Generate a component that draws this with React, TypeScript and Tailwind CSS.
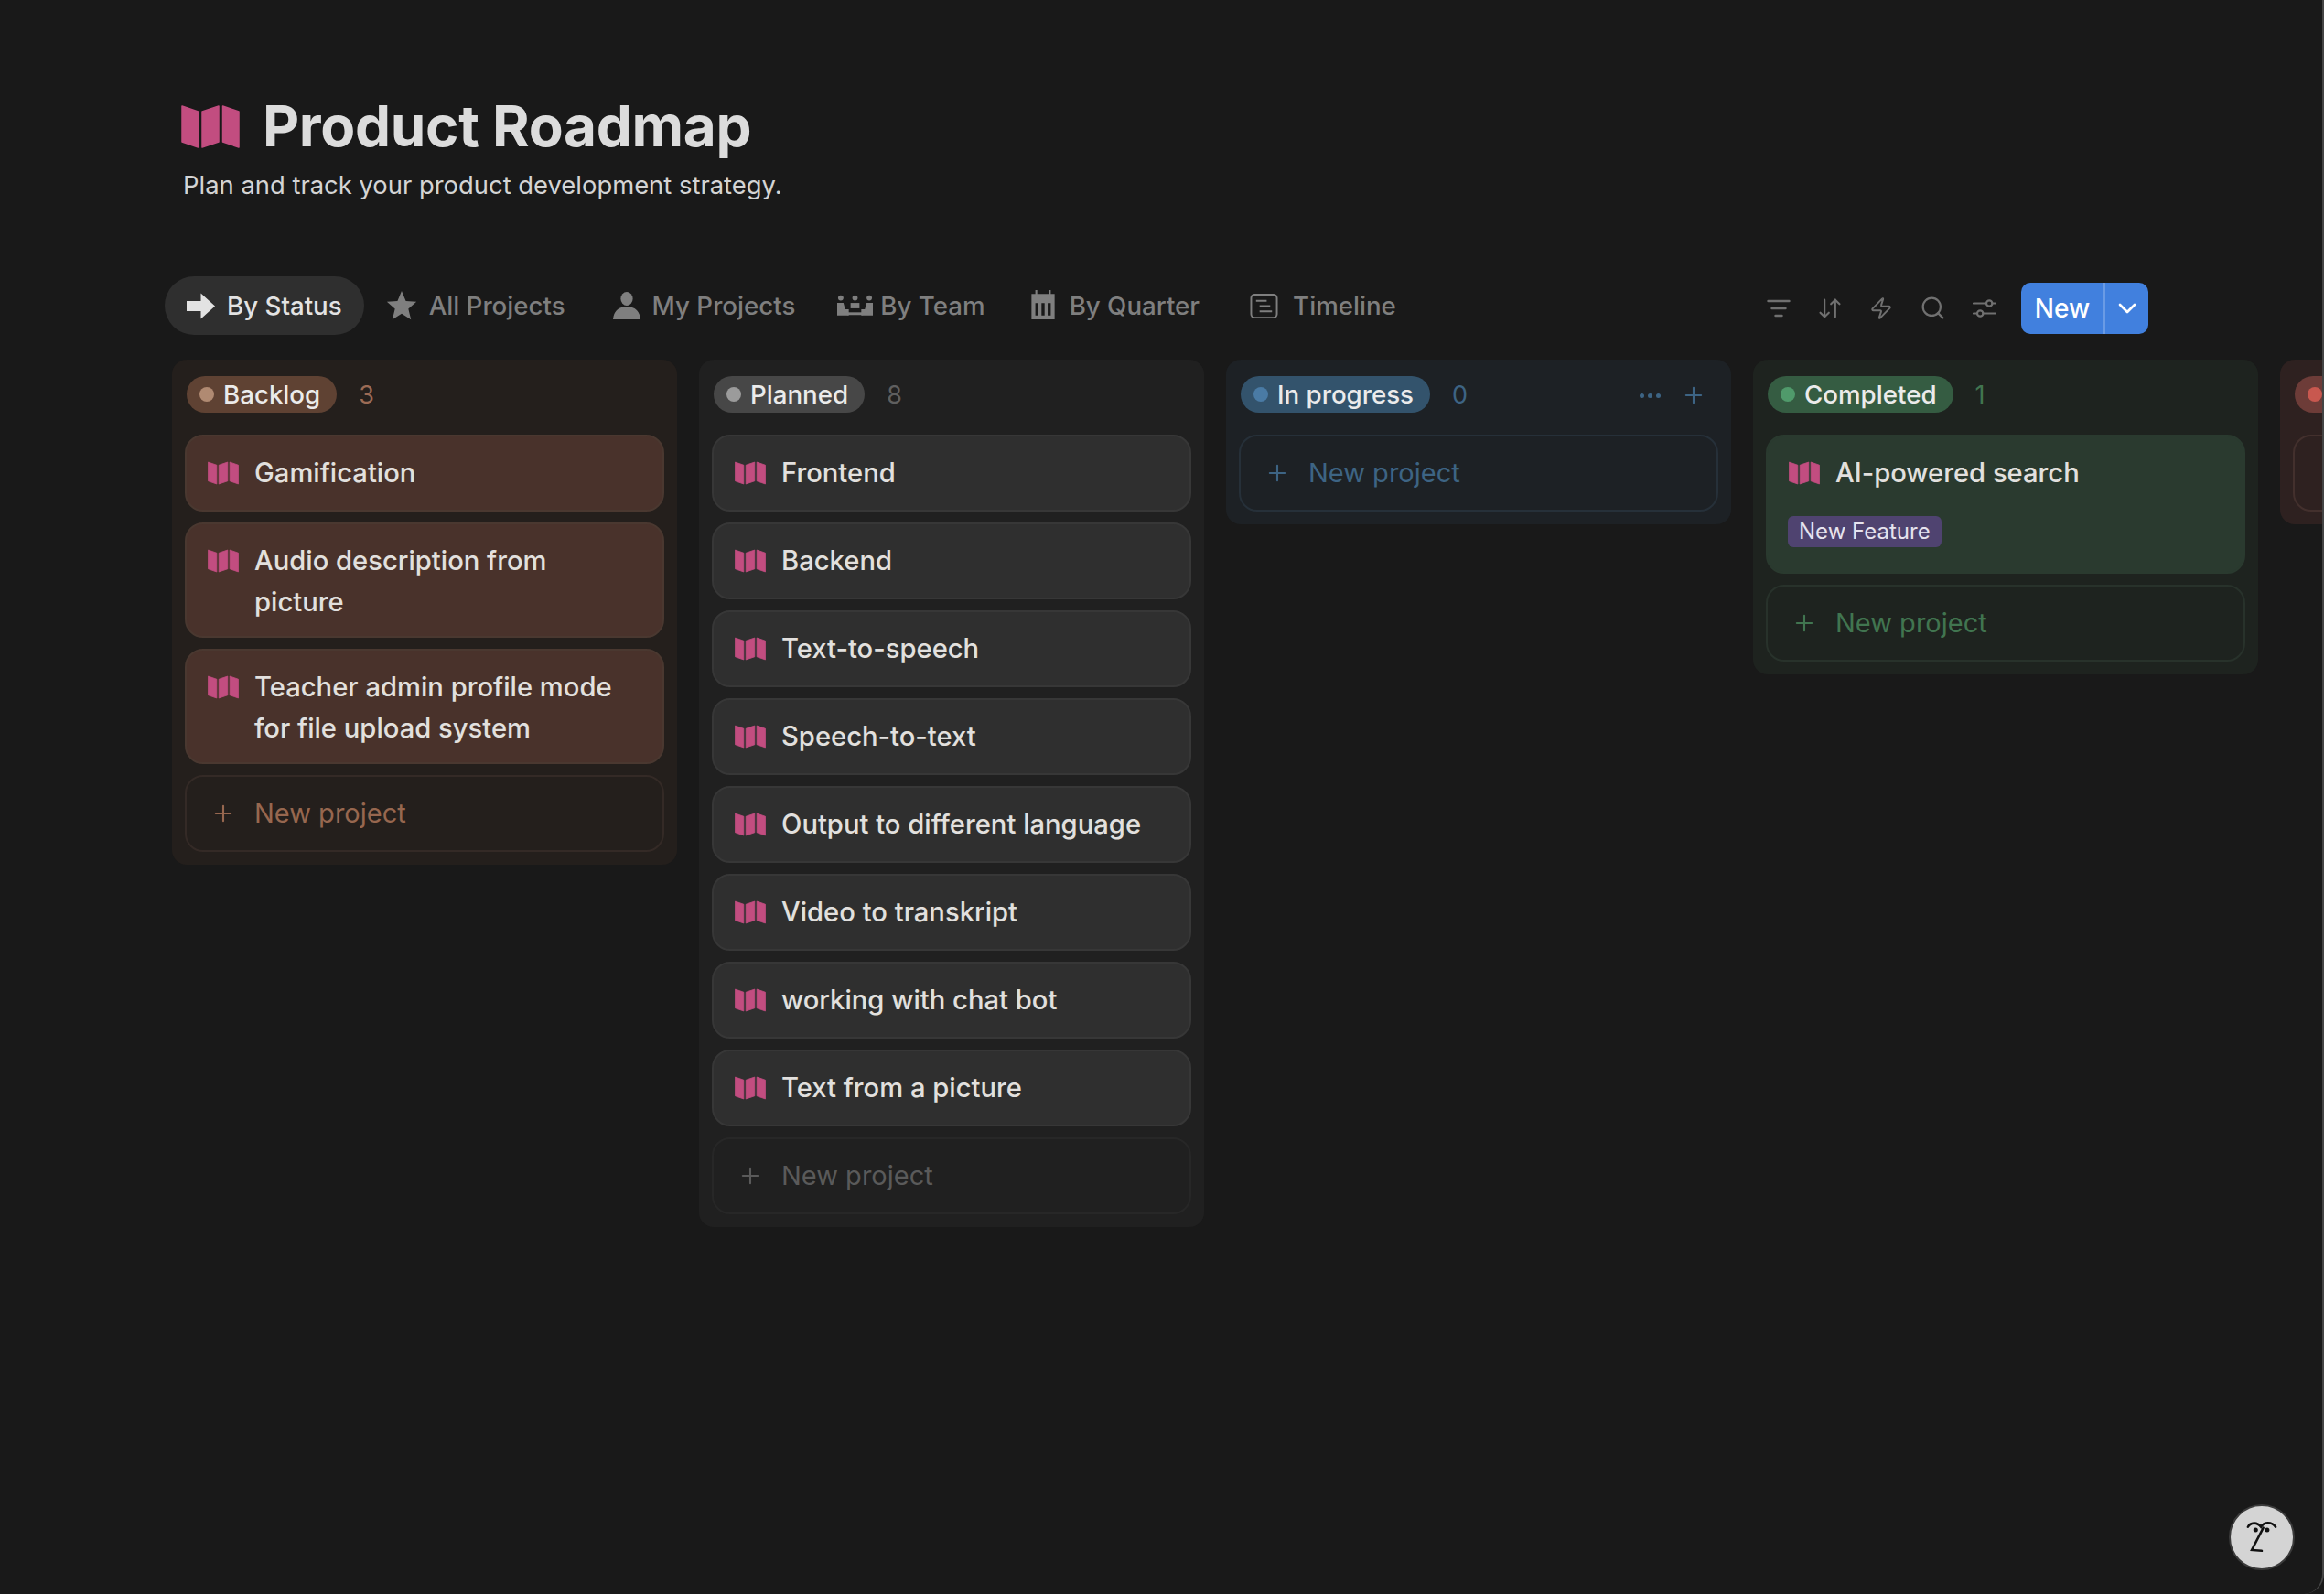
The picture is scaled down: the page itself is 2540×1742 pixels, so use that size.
import React from "react";
import { Plus, ChevronDown, Search, Zap, ArrowDownUp } from "lucide-react";

type Card = { title: string; tag?: string };

function MapIcon({ className }: { className: string }) {
  return (
    <svg viewBox="0 0 64 47" className={className} fill="#c24d80" stroke="#c24d80" strokeWidth="1.5" strokeLinejoin="round">
      <path d="M1 1 L18.5 7 V46 L1 40 Z" />
      <path d="M23 7 L41 1 V40 L23 46 Z" />
      <path d="M45.5 1 L63 7 V46 L45.5 40 Z" />
    </svg>
  );
}

function ArrowTabIcon() {
  return (
    <svg viewBox="0 0 20 20" className="w-[31px] h-[31px]" fill="currentColor">
      <path d="M0 6.5 H10 V1 L20 10 L10 19 V13.5 H0 Z" />
    </svg>
  );
}

function StarIcon() {
  return (
    <svg viewBox="0 0 20 20" className="w-[34px] h-[34px]" fill="currentColor">
      <path d="M10 .6 L12.7 7 L19.5 7.5 L14.3 12 L16 18.9 L10 15.2 L4 18.9 L5.7 12 L.5 7.5 L7.3 7 Z" />
    </svg>
  );
}

function PersonIcon() {
  return (
    <svg viewBox="0 0 20 20" className="w-[30px] h-[32px]" fill="currentColor">
      <ellipse cx="10" cy="5" rx="4.4" ry="5" />
      <path d="M7 11 H13 C16.8 12 19.4 14.5 20 20 H0 C.6 14.5 3.2 12 7 11 Z" />
    </svg>
  );
}

function TeamIcon() {
  return (
    <svg viewBox="0 0 40 24" className="w-[39px] h-[24px]" fill="currentColor">
      <circle cx="4" cy="3.4" r="3" />
      <circle cx="20" cy="3.4" r="3" />
      <circle cx="36" cy="3.4" r="3" />
      <path d="M0 9 H7 L9 16 H13 V23 H0 Z" />
      <path d="M15 9 H25 V15 H15 Z" />
      <path d="M33 9 H40 V23 H27 V16 H31 Z" />
      <path d="M11 19.5 H29 V22.5 H11 Z" />
    </svg>
  );
}

function CalendarIcon() {
  return (
    <svg viewBox="0 0 30 38" className="w-[30px] h-[32px] mb-[2px]">
      <path fill="currentColor" d="M5 0 H7.5 V5 H22.5 V0 H25 V5 H30 V38 H0 V5 H5 Z" />
      <path fill="#191919" d="M5 17 H9 V33 H5 Z M13 17 H17 V33 H13 Z M21 17 H25 V33 H21 Z" />
    </svg>
  );
}

function TimelineIcon() {
  return (
    <svg viewBox="0 0 32 32" className="w-[31px] h-[31px]" fill="none" stroke="currentColor" strokeWidth="2">
      <rect x="1.5" y="3" width="29" height="26" rx="4" />
      <path d="M7 10 H19 M11 16 H23 M11 22 H25" />
    </svg>
  );
}

function FilterIcon() {
  return (
    <svg viewBox="0 0 26 22" className="w-[26px] h-[22px]" fill="none" stroke="currentColor" strokeWidth="2.4" strokeLinecap="round">
      <path d="M1.5 3 H24.5 M5.5 11 H20.5 M9.5 19 H16.5" />
    </svg>
  );
}

function SlidersIcon() {
  return (
    <svg viewBox="0 0 26 24" className="w-[26px] h-[24px]" fill="none" stroke="currentColor" strokeWidth="2.2" strokeLinecap="round">
      <path d="M1 6.5 H15 M21.5 6.5 H25 M1 17.5 H5 M11.5 17.5 H25" />
      <circle cx="18.2" cy="6.5" r="3.2" />
      <circle cx="8.2" cy="17.5" r="3.2" />
    </svg>
  );
}

function FaceIcon() {
  return (
    <svg viewBox="0 0 40 44" className="w-[34px] h-[37px]" fill="none" stroke="#111" strokeWidth="3" strokeLinecap="round">
      <path d="M2 8 C5 2 14 1 19 8 C23 1 33 1 38 8" />
      <path d="M22 9 L7 38 L20 39" />
      <circle cx="12" cy="12" r="3" fill="#111" stroke="none" />
      <circle cx="27" cy="12" r="3" fill="#111" stroke="none" />
    </svg>
  );
}

const tabs = [
  { label: "By Status", icon: <ArrowTabIcon />, row: "gap-[13px] bg-[#2f2f2f] text-[#e3e3e3]" },
  { label: "All Projects", icon: <StarIcon />, row: "gap-[13px] text-[#7f7f7f]" },
  { label: "My Projects", icon: <PersonIcon />, row: "ml-[4px] gap-[13px] text-[#7f7f7f]" },
  { label: "By Team", icon: <TeamIcon />, row: "-ml-[2px] gap-[8px] text-[#7f7f7f]" },
  { label: "By Quarter", icon: <CalendarIcon />, row: "gap-[14px] text-[#7f7f7f]" },
  { label: "Timeline", icon: <TimelineIcon />, row: "ml-[7px] gap-[16px] text-[#7f7f7f]" },
];

const columns: {
  name: string;
  count: string;
  addLabel: string;
  cards: Card[];
  bg: string;
  card: string;
  pill: string;
  dot: string;
  countText: string;
  addBorder: string;
  addText: string;
}[] = [
  {
    name: "Backlog",
    count: "3",
    addLabel: "New project",
    cards: [
      { title: "Gamification" },
      { title: "Audio description from picture" },
      { title: "Teacher admin profile mode for file upload system" },
    ],
    bg: "bg-[#241f1c]",
    card: "bg-[#49322b] border-[#4a3830]",
    pill: "bg-[#5f4233]",
    dot: "bg-[#b08a72]",
    countText: "text-[#9c6b55]",
    addBorder: "border-[#342a26]",
    addText: "text-[#97674f]",
  },
  {
    name: "Planned",
    count: "8",
    addLabel: "New project",
    cards: [
      { title: "Frontend" },
      { title: "Backend" },
      { title: "Text-to-speech" },
      { title: "Speech-to-text" },
      { title: "Output to different language" },
      { title: "Video to transkript" },
      { title: "working with chat bot" },
      { title: "Text from a picture" },
    ],
    bg: "bg-[#202020]",
    card: "bg-[#2f2f2f] border-[#373737]",
    pill: "bg-[#474747]",
    dot: "bg-[#9b9b9b]",
    countText: "text-[#5f5f5f]",
    addBorder: "border-[#272727]",
    addText: "text-[#5a5a5a]",
  },
  {
    name: "In progress",
    count: "0",
    addLabel: "New project",
    cards: [],
    bg: "bg-[#1d2125]",
    card: "",
    pill: "bg-[#33536c]",
    dot: "bg-[#4a7ba5]",
    countText: "text-[#3d6484]",
    addBorder: "border-[#263039]",
    addText: "text-[#3d6484]",
  },
  {
    name: "Completed",
    count: "1",
    addLabel: "New project",
    cards: [{ title: "AI-powered search", tag: "New Feature" }],
    bg: "bg-[#1e231f]",
    card: "bg-[#2a3a2f] border-[#2a3a2f]",
    pill: "bg-[#355c42]",
    dot: "bg-[#509a6b]",
    countText: "text-[#417550]",
    addBorder: "border-[#28322b]",
    addText: "text-[#417550]",
  },
  {
    // runs off the right edge, only the dot and the box corner show
    name: "",
    count: "",
    addLabel: "",
    cards: [],
    bg: "bg-[#2e2120]",
    card: "",
    pill: "bg-[#6d3c38]",
    dot: "bg-[#c8584f]",
    countText: "text-[#a0524c]",
    addBorder: "border-[#43302d]",
    addText: "text-[#a0524c]",
  },
];

export default function App() {
  return (
    <div className="relative w-[2540px] h-[1742px] overflow-hidden bg-[#191919] font-['Inter',sans-serif] font-medium">
      {/* Title */}
      <header className="pl-[198px] pt-[103px]">
        <div className="flex items-center gap-[25px] h-[70px]">
          <MapIcon className="w-[64px] h-[47px]" />
          <h1 className="text-[62px] leading-[70px] font-bold tracking-[-0.3px] text-[#dcdcdc]">Product Roadmap</h1>
        </div>
        <p className="mt-[9px] ml-[2px] text-[27.4px] leading-[40px] font-normal text-[#d4d4d4]">
          Plan and track your product development strategy.
        </p>
      </header>

      {/* Tabs and toolbar */}
      <div className="flex items-center justify-between mt-[80px] pl-[180px] pr-[192px] h-[64px]">
        <div className="flex items-center">
          {tabs.map((tab) => (
            <div key={tab.label} className={`flex items-center h-[64px] px-6 rounded-full text-[27.7px] ${tab.row}`}>
              {tab.icon}
              <span className="pt-[2px]">{tab.label}</span>
            </div>
          ))}
        </div>
        <div className="flex items-center mt-[5px] text-[#707070]">
          <div className="flex items-center gap-[29px] mr-[27px]">
            <FilterIcon />
            <ArrowDownUp className="w-[28px] h-[30px]" strokeWidth={1.8} />
            <Zap className="w-[26px] h-[30px]" strokeWidth={1.8} />
            <Search className="w-[29px] h-[29px]" strokeWidth={1.8} />
            <SlidersIcon />
          </div>
          <div className="flex h-[56px] w-[139px] rounded-[10px] bg-[#4180de] text-white">
            <div className="flex items-center justify-center w-[92px] text-[28px] border-r-2 border-[#6a9be5]">New</div>
            <div className="flex flex-1 items-center justify-center">
              <ChevronDown className="w-[32px] h-[32px]" strokeWidth={2} />
            </div>
          </div>
        </div>
      </div>

      {/* Board */}
      <div className="flex items-start gap-6 mt-[27px] pl-[188px] w-[2700px]">
        {columns.map((col, i) => (
          <section key={i} className={`w-[552px] shrink-0 rounded-[16px] px-[14px] pt-[18px] pb-[14px] ${col.bg}`}>
            <div className="flex items-center h-[40px] mb-[24px] pl-[2px] pr-[13px]">
              <div className={`flex items-center gap-[10px] h-[40px] pl-[14px] pr-[18px] rounded-full text-[27.7px] text-[#ebebeb] ${col.pill}`}>
                <span className={`w-[16px] h-[16px] rounded-full ${col.dot}`} />
                <span className="pt-[2px]">{col.name}</span>
              </div>
              <span className={`ml-[24px] pt-[2px] text-[27px] font-normal ${col.countText}`}>{col.count}</span>
              {col.name === "In progress" && (
                <div className="ml-auto flex items-center gap-[22px] pt-[2px] text-[#3d6484]">
                  <div className="flex gap-[4px]">
                    <span className="w-[5px] h-[5px] rounded-full bg-[#3d6484]" />
                    <span className="w-[5px] h-[5px] rounded-full bg-[#3d6484]" />
                    <span className="w-[5px] h-[5px] rounded-full bg-[#3d6484]" />
                  </div>
                  <Plus className="w-[28px] h-[28px]" strokeWidth={1.8} />
                </div>
              )}
            </div>
            <div className="flex flex-col gap-[12px]">
              {col.cards.map((card) => (
                <div key={card.title} className={`min-h-[84px] rounded-[20px] border-2 pt-[17px] pb-[15px] pl-[23px] pr-[40px] ${col.card}`}>
                  <div className="flex gap-[17px]">
                    <MapIcon className="w-[34px] h-[26px] mt-[10px] shrink-0" />
                    <span className="text-[29.2px] leading-[45px] text-[#e2e0de]">{card.title}</span>
                  </div>
                  {card.tag && (
                    <span className="inline-block -ml-[1px] mt-[25px] mb-[12px] h-[34px] px-[12px] rounded-[6px] bg-[#4f4370] text-[24px] leading-[34px] font-normal text-[#e6e3ee]">
                      {card.tag}
                    </span>
                  )}
                </div>
              ))}
              <div className={`flex items-center h-[84px] rounded-[20px] border-2 pl-[26px] gap-[20px] text-[29px] font-normal ${col.addBorder} ${col.addText}`}>
                <Plus className="w-[28px] h-[28px]" strokeWidth={1.8} />
                {col.addLabel}
              </div>
            </div>
          </section>
        ))}
      </div>

      {/* Help button */}
      <div className="absolute left-[2436px] top-[1644px] flex items-center justify-center w-[72px] h-[72px] rounded-full bg-[#d4d4d4] border-2 border-[#3a3a3a]">
        <FaceIcon />
      </div>

      {/* Window edge */}
      <div className="absolute inset-0 pointer-events-none border-r-2 border-[#444444] rounded-br-[22px]" />
    </div>
  );
}
